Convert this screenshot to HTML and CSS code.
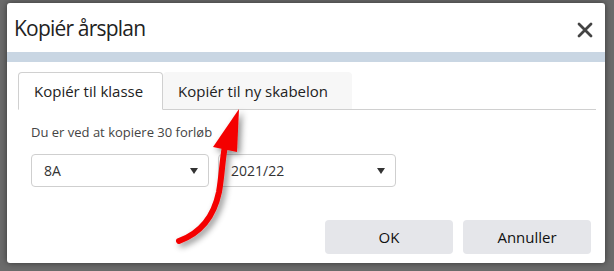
FILE: index.html
```html
<!DOCTYPE html>
<html lang="da">
  <head>
    <meta charset="UTF-8" />
    <meta name="viewport" content="width=device-width, initial-scale=1.0"/>
    <title>Kopiér årsplan</title>
    <link rel="stylesheet" href="styles.css">
  </head>
  <body>
    <div class="dialog">
      <div class="dialog-header">
        <h1>Kopiér årsplan</h1>
        <button type="button" class="close" aria-label="Luk">
          <svg width="16" height="16" viewBox="0 0 16 16">
            <path d="M2 2 L14 14 M14 2 L2 14" stroke="#444" stroke-width="2.8" stroke-linecap="round"/>
          </svg>
        </button>
      </div>
      <div class="dialog-bar"></div>
      <div class="dialog-body">
        <div class="tabs">
          <div class="tab active">Kopiér til klasse</div>
          <div class="tab">Kopiér til ny skabelon</div>
        </div>
        <div class="tab-content">
          <p class="info">Du er ved at kopiere 30 forløb</p>
          <div class="selects">
            <div class="select"><span>8A</span><span class="caret"></span></div>
            <div class="select"><span>2021/22</span><span class="caret"></span></div>
          </div>
        </div>
        <div class="actions">
          <button type="button" class="btn">OK</button>
          <button type="button" class="btn">Annuller</button>
        </div>
      </div>
    </div>

    <svg class="annotation" width="614" height="271" viewBox="0 0 614 271">
      <defs>
        <filter id="shadow" x="-50%" y="-50%" width="200%" height="200%">
          <feDropShadow dx="3" dy="3" stdDeviation="3" flood-color="#000" flood-opacity="0.45"/>
        </filter>
      </defs>
      <g filter="url(#shadow)">
        <path d="M179 241 C201 233 214 216 219 192 C222 175 222 162 225 146" fill="none" stroke="#f40000" stroke-width="6" stroke-linecap="round"/>
        <polygon points="239,109 213,147 237,152" fill="#f40000"/>
      </g>
    </svg>
  </body>
</html>
```

FILE: styles.css
```css
body {
  margin: 0;
  background: #6b6b6b;
  font-family: "Open Sans", "Noto Sans", sans-serif;
  color: #222;
  position: relative;
  width: 614px;
  height: 271px;
  overflow: hidden;
}

.dialog {
  position: relative;
  margin: 3px 0 0 7px;
  width: 598px;
  height: 260px;
  background: white;
  border-radius: 3px;
  box-shadow: 0 0 6px rgba(0, 0, 0, 0.5);
  display: flex;
  flex-direction: column;
}

.dialog-header {
  height: 49px;
  display: flex;
  align-items: center;
  justify-content: space-between;
  padding: 0 12px 0 7px;
}

.dialog-header h1 {
  margin: 0;
  font-size: 21px;
  letter-spacing: -0.8px;
  font-weight: normal;
  color: #222;
}

.close {
  border: none;
  background: none;
  padding: 0;
  width: 16px;
  height: 16px;
  margin-top: 4px;
  cursor: pointer;
}

.dialog-bar {
  height: 10px;
  background: #c9d6e3;
}

.dialog-body {
  flex: 1;
  padding: 10px 9px 9px 11px;
  display: flex;
  flex-direction: column;
}

.tabs {
  display: flex;
  border-bottom: 1px solid #d0d0d0;
  height: 37px;
}

.tab {
  display: flex;
  align-items: center;
  padding: 0 15px;
  font-size: 15px;
  color: #222;
}

.tab.active {
  width: 145px;
  box-sizing: border-box;
  border: 1px solid #d0d0d0;
  border-bottom: 1px solid white;
  border-radius: 4px 4px 0 0;
  margin-bottom: -1px;
  background: white;
}

.tab:not(.active) {
  width: 189px;
  box-sizing: border-box;
  background: #f7f7f7;
  border-radius: 4px 4px 0 0;
}

.tab-content {
  padding-left: 13px;
}

.info {
  margin: 13px 0 13px;
  font-size: 13px;
  color: #444;
}

.selects {
  display: flex;
  gap: 9px;
}

.select {
  width: 178px;
  height: 33px;
  box-sizing: border-box;
  border: 1px solid #cfcfcf;
  border-radius: 4px;
  display: flex;
  align-items: center;
  justify-content: space-between;
  padding: 0 10px 0 12px;
  font-size: 14px;
  color: #333;
}

.caret {
  width: 0;
  height: 0;
  border-left: 4px solid transparent;
  border-right: 4px solid transparent;
  border-top: 6px solid #333;
}

.actions {
  margin-top: auto;
  display: flex;
  justify-content: flex-end;
  gap: 10px;
  padding-right: 5px;
}

.btn {
  width: 128px;
  height: 34px;
  border: none;
  border-radius: 4px;
  background: #e5e6ea;
  font-family: inherit;
  font-size: 15px;
  color: #111;
  cursor: pointer;
}

.annotation {
  position: absolute;
  left: 0;
  top: 0;
  pointer-events: none;
}
```
